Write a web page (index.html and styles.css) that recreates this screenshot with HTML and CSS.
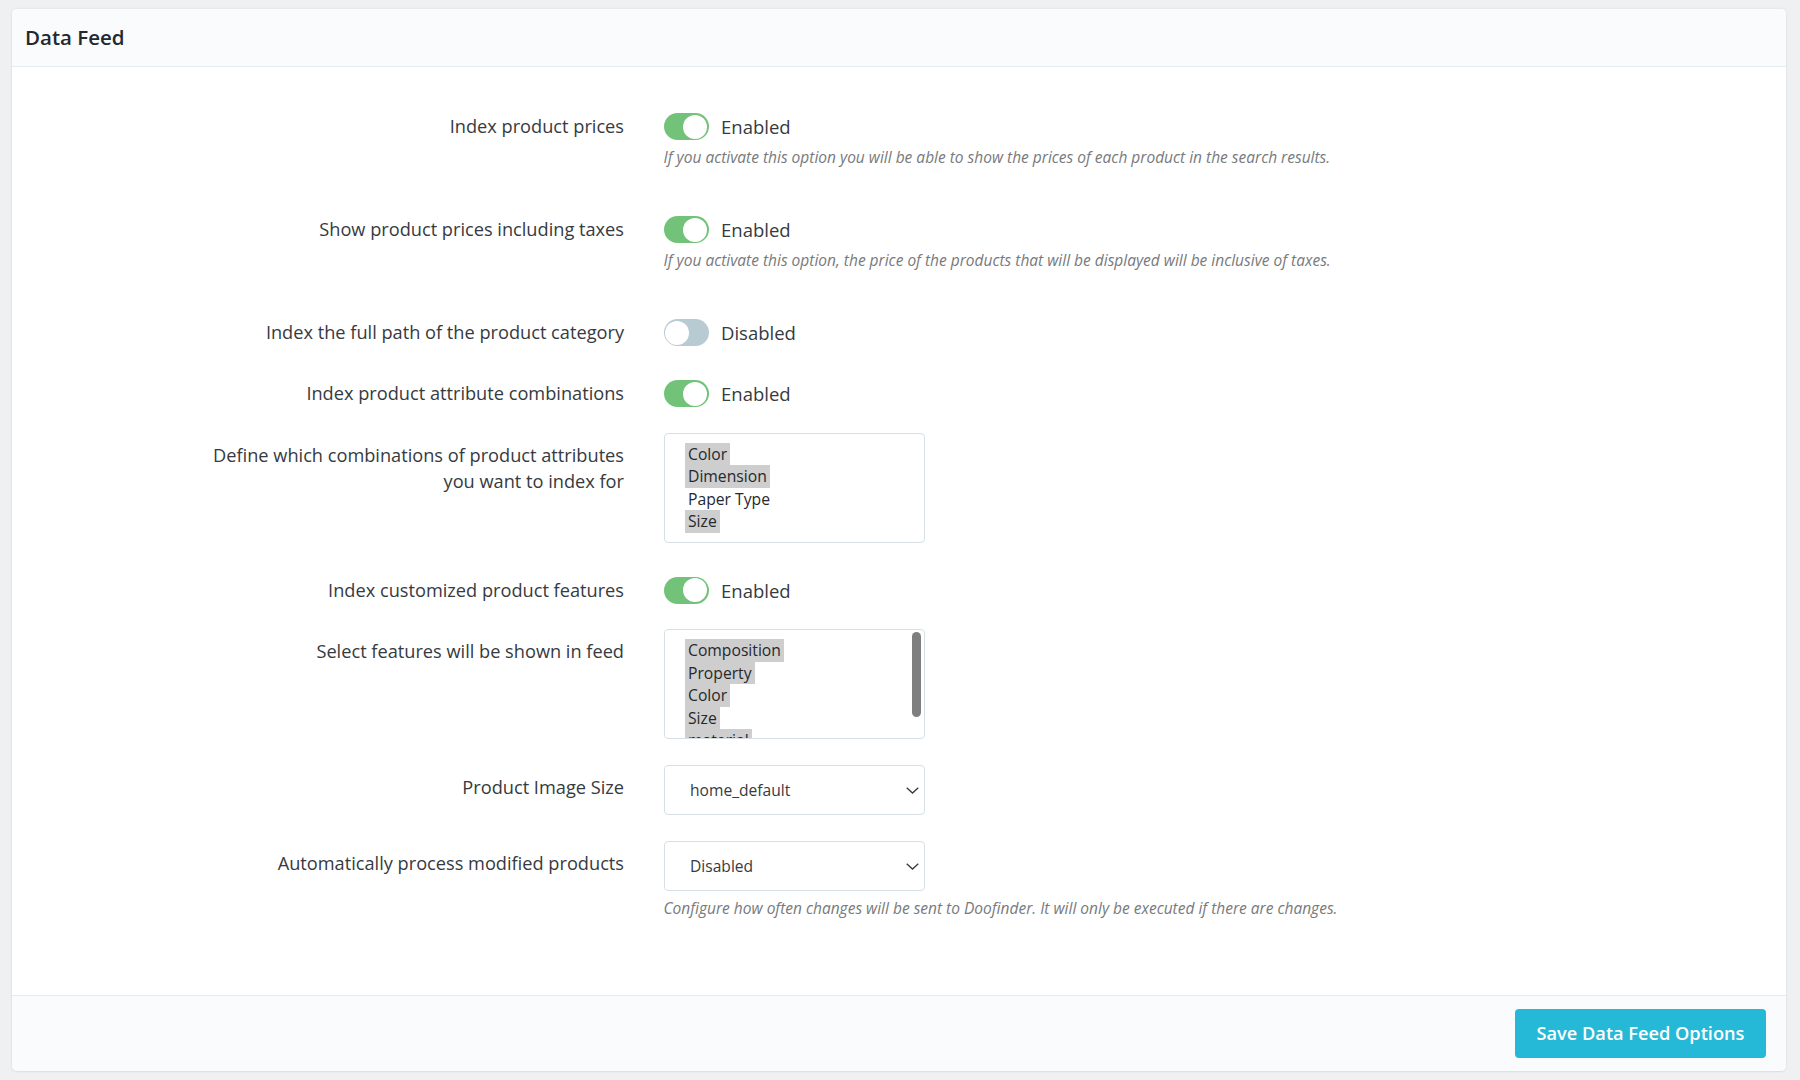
FILE: index.html
```html
<!DOCTYPE html>
<html lang="en">
<head>
<meta charset="utf-8">
<title>Data Feed</title>
<link rel="stylesheet" href="styles.css">
</head>
<body>
<div class="card">
  <div class="card-header"><h3 class="card-title">Data Feed</h3></div>
  <div class="card-body">
    <div class="form-row switch-row">
      <label class="form-label">Index product prices</label>
      <div class="control">
        <div class="switch-line"><span class="switch on"><span class="knob"></span></span><span class="switch-text">Enabled</span></div>
        <p class="help">If you activate this option you will be able to show the prices of each product in the search results.</p>
      </div>
    </div>
    <div class="form-row switch-row mt-49">
      <label class="form-label">Show product prices including taxes</label>
      <div class="control">
        <div class="switch-line"><span class="switch on"><span class="knob"></span></span><span class="switch-text">Enabled</span></div>
        <p class="help">If you activate this option, the price of the products that will be displayed will be inclusive of taxes.</p>
      </div>
    </div>
    <div class="form-row switch-row mt-49">
      <label class="form-label">Index the full path of the product category</label>
      <div class="control">
        <div class="switch-line"><span class="switch off"><span class="knob"></span></span><span class="switch-text">Disabled</span></div>
      </div>
    </div>
    <div class="form-row switch-row mt-34">
      <label class="form-label">Index product attribute combinations</label>
      <div class="control">
        <div class="switch-line"><span class="switch on"><span class="knob"></span></span><span class="switch-text">Enabled</span></div>
      </div>
    </div>
    <div class="form-row box-row mt-25">
      <label class="form-label">Define which combinations of product attributes<br>you want to index for</label>
      <div class="control">
        <div class="multi">
          <div class="opt"><span class="sel">Color</span></div>
          <div class="opt"><span class="sel">Dimension</span></div>
          <div class="opt"><span>Paper Type</span></div>
          <div class="opt"><span class="sel">Size</span></div>
        </div>
      </div>
    </div>
    <div class="form-row switch-row mt-34">
      <label class="form-label">Index customized product features</label>
      <div class="control">
        <div class="switch-line"><span class="switch on"><span class="knob"></span></span><span class="switch-text">Enabled</span></div>
      </div>
    </div>
    <div class="form-row box-row mt-25">
      <label class="form-label">Select features will be shown in feed</label>
      <div class="control">
        <div class="multi">
          <div class="opt"><span class="sel">Composition</span></div>
          <div class="opt"><span class="sel">Property</span></div>
          <div class="opt"><span class="sel">Color</span></div>
          <div class="opt"><span class="sel">Size</span></div>
          <div class="opt"><span class="sel">material</span></div>
          <span class="thumb"></span>
        </div>
      </div>
    </div>
    <div class="form-row box-row mt-26">
      <label class="form-label">Product Image Size</label>
      <div class="control">
        <div class="select"><span>home_default</span><svg class="chev" width="13" height="7" viewBox="0 0 13 7"><path d="M0.7 0.7 L6.5 6 L12.3 0.7" fill="none" stroke="#363a41" stroke-width="1.3"/></svg></div>
      </div>
    </div>
    <div class="form-row box-row mt-25">
      <label class="form-label">Automatically process modified products</label>
      <div class="control">
        <div class="select"><span>Disabled</span><svg class="chev" width="13" height="7" viewBox="0 0 13 7"><path d="M0.7 0.7 L6.5 6 L12.3 0.7" fill="none" stroke="#363a41" stroke-width="1.3"/></svg></div>
        <p class="help">Configure how often changes will be sent to Doofinder. It will only be executed if there are changes.</p>
      </div>
    </div>
  </div>
  <div class="card-footer">
    <button class="btn-save" type="button">Save Data Feed Options</button>
  </div>
</div>
</body>
</html>
```

FILE: styles.css
```css
html, body {
  margin: 0;
  padding: 0;
}
body {
  background: #eef0f1;
  font-family: "Open Sans", "Noto Sans", "Liberation Sans", sans-serif;
  color: #363a41;
  padding-top: 9px;
  height: 1080px;
  box-sizing: border-box;
}
.card {
  margin-left: 11.5px;
  width: 1774.5px;
  background: #fff;
  border-radius: 5px;
  box-shadow: 0 0 3px rgba(0, 0, 0, 0.08), 0 1px 2px rgba(0, 0, 0, 0.05);
  overflow: hidden;
}
.card-header {
  height: 57px;
  background: #fafbfc;
  border-bottom: 1px solid #e6ebed;
  display: flex;
  align-items: center;
  padding-left: 13.5px;
}
.card-title {
  margin: 0;
  margin-top: -2px;
  font-size: 20.5px;
  font-weight: 600;
  color: #25282d;
}
.card-body {
  padding: 46px 0 77px 0;
}
.form-row {
  display: grid;
  grid-template-columns: 612.5px 1fr;
  column-gap: 39.5px;
  align-items: start;
}
.mt-49 { margin-top: 49px; }
.mt-34 { margin-top: 34px; }
.mt-26 { margin-top: 26px; }
.mt-25 { margin-top: 25.5px; }
.form-label {
  text-align: right;
  font-size: 18.2px;
  line-height: 26px;
  color: #363a41;
}
.switch-row .form-label {
  line-height: 27px;
}
.box-row .form-label {
  padding-top: 9px;
}
.control {
  display: flex;
  flex-direction: column;
  align-items: flex-start;
}
.switch-line {
  display: flex;
  align-items: center;
  height: 27px;
}
.switch {
  position: relative;
  width: 45px;
  height: 27px;
  border-radius: 14px;
  box-sizing: border-box;
  display: block;
}
.switch.on { background: #72c279; }
.switch.off { background: #b8cbd2; }
.knob {
  position: absolute;
  top: 1.5px;
  width: 24px;
  height: 24px;
  border-radius: 50%;
  background: #fff;
}
.switch.on .knob { right: 1.5px; }
.switch.off .knob { left: 1.5px; }
.switch-text {
  margin-left: 12.5px;
  font-size: 18.5px;
  color: #363a41;
}
.help {
  margin: 7px 0 0 0;
  font-size: 15.5px;
  line-height: 20px;
  font-style: italic;
  color: #777a7d;
}
.multi {
  position: relative;
  width: 261px;
  height: 110px;
  box-sizing: border-box;
  border: 1px solid #d6e0e4;
  border-radius: 4px;
  padding: 9px 0 0 20.5px;
  overflow: hidden;
  background: #fff;
}
.opt {
  height: 22.5px;
  line-height: 22.5px;
  font-size: 15.7px;
  color: #25282d;
}
.opt span {
  display: inline-block;
  padding: 0 3px;
}
.opt .sel {
  background: #cecece;
}
.thumb {
  position: absolute;
  right: 3px;
  top: 2px;
  width: 9px;
  height: 85px;
  border-radius: 5px;
  background: #7f7f7f;
}
.select {
  width: 261px;
  height: 50px;
  box-sizing: border-box;
  border: 1px solid #d6e0e4;
  border-radius: 4px;
  padding: 0 4.5px 0 25.5px;
  display: flex;
  align-items: center;
  justify-content: space-between;
  font-size: 15.6px;
  color: #363a41;
  background: #fff;
}
.chev {
  display: block;
  margin-top: 1px;
}
.card-footer {
  background: #fafbfc;
  border-top: 1px solid #e6ebed;
  padding: 13px 20px 13px 0;
  display: flex;
  justify-content: flex-end;
}
.btn-save {
  height: 49px;
  width: 251px;
  background: #25b9d7;
  color: #fff;
  border: 0;
  border-radius: 4px;
  font-family: "Open Sans", "Noto Sans", "Liberation Sans", sans-serif;
  font-size: 18.2px;
  font-weight: 600;
  padding: 0;
}
```
